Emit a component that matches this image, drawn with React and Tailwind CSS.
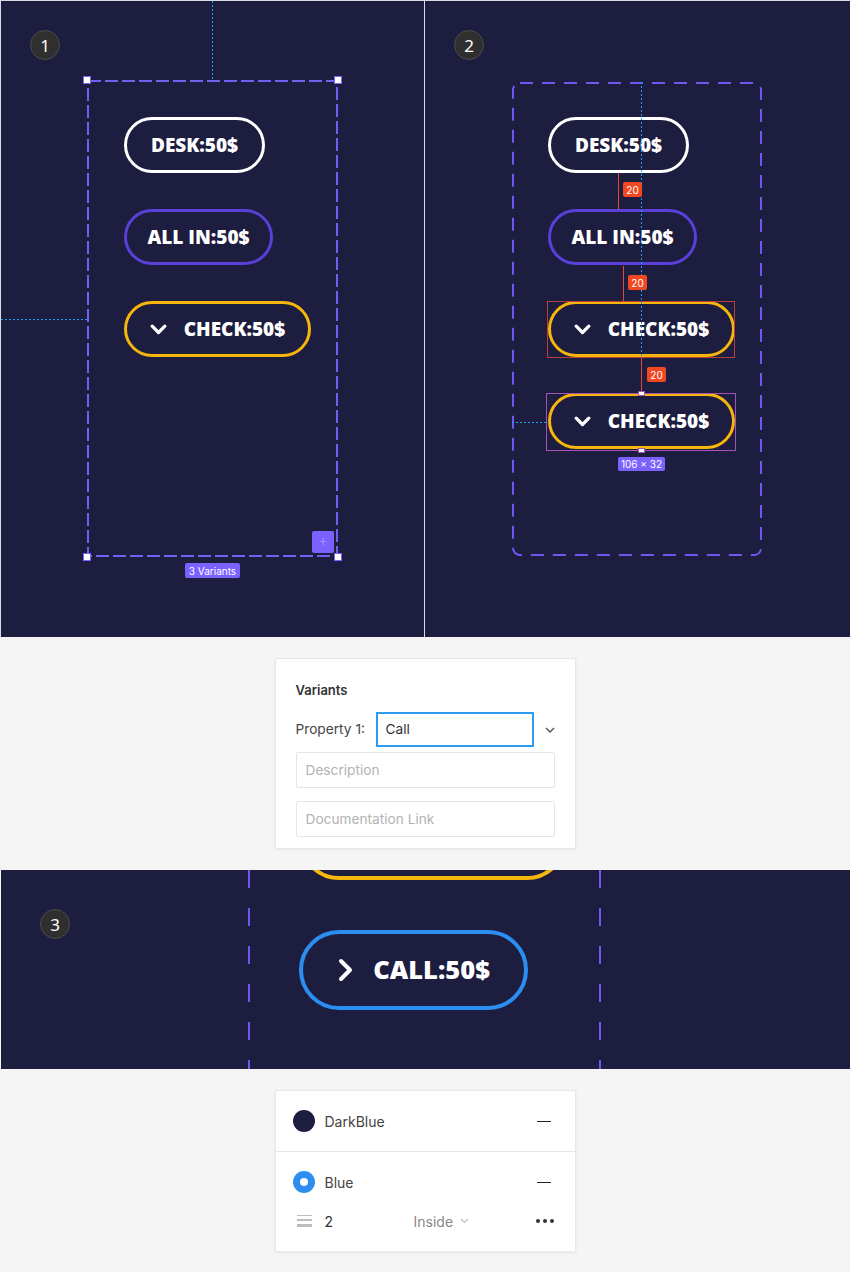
import React from "react";

const pillText =
  "font-['Open_Sans',sans-serif] font-extrabold text-[19px] leading-none text-white whitespace-nowrap";

const dotV =
  "w-px bg-[repeating-linear-gradient(to_bottom,#1d9df3_0px,#1d9df3_2px,transparent_2px,transparent_4px)]";
const dotH =
  "h-px bg-[repeating-linear-gradient(to_right,#1d9df3_0px,#1d9df3_2px,transparent_2px,transparent_4px)]";

function Badge({ n }) {
  return (
    <div className="flex h-[30px] w-[30px] items-center justify-center rounded-full border border-[#4d4d4d] bg-[#2f2f2f] font-['Noto_Sans',sans-serif] text-[17px] leading-none text-white">
      {n}
    </div>
  );
}

function ChevronDown() {
  return (
    <svg width="17" height="11" viewBox="0 0 17 11" fill="none">
      <path d="M2.2 2.2L8.5 8.5L14.8 2.2" stroke="white" strokeWidth="3.2" strokeLinecap="round" strokeLinejoin="round" />
    </svg>
  );
}

function Pill({ className, chevron, children }) {
  return (
    <div className={"flex h-[56px] shrink-0 items-center justify-center gap-[17px] rounded-full border-[3px] " + className}>
      {chevron && <ChevronDown />}
      <span className={pillText}>{children}</span>
    </div>
  );
}

function Handle({ className }) {
  return <div className={"absolute h-[8px] w-[8px] border border-[#7b61ff] bg-white " + className} />;
}

function Tag({ className, children }) {
  return (
    <div className={"absolute flex items-center justify-center rounded-[2px] font-['Inter',sans-serif] text-[10px] leading-none text-white " + className}>
      {children}
    </div>
  );
}

function Panel1() {
  return (
    <div className="relative h-[636px] w-[423px] shrink-0 bg-[#1d1d3f] pl-[86px] pt-[79px]">
      <div className="absolute left-[29px] top-[29px]">
        <Badge n="1" />
      </div>
      <div className={"absolute left-[211px] top-0 h-[79px] " + dotV} />
      <div className={"absolute left-0 top-[318px] w-[86px] " + dotH} />
      <div className="relative flex h-[477px] w-[251px] flex-col items-start gap-[36px] pl-[37px] pt-[37px]">
        <svg className="pointer-events-none absolute left-0 top-0" width="251" height="477">
          <rect x="1" y="1" width="249" height="475" fill="none" stroke="#7160f2" strokeWidth="2" strokeDasharray="13 4" />
        </svg>
        <Pill className="w-[141px] border-white">DESK:50$</Pill>
        <Pill className="w-[149px] border-[#5a3fd9]">ALL IN:50$</Pill>
        <Pill className="w-[187px] border-[#f6b60c]" chevron>
          CHECK:50$
        </Pill>
        <Handle className="-left-[4px] -top-[4px]" />
        <Handle className="-right-[4px] -top-[4px]" />
        <Handle className="-bottom-[4px] -left-[4px]" />
        <Handle className="-bottom-[4px] -right-[4px]" />
        <div className="absolute left-[225px] top-[451px] flex h-[22px] w-[22px] items-center justify-center rounded-[2px] bg-[#7b61ff] text-[14px] font-light leading-none text-[#b9aaff]">
          +
        </div>
        <Tag className="left-[98px] top-[483px] h-[15px] w-[55px] bg-[#7b61ff]">3 Variants</Tag>
      </div>
    </div>
  );
}

function Measure({ x, y, h, lx, ly }) {
  return (
    <>
      <div className="absolute w-px bg-[#e2483a]" style={{ left: x, top: y, height: h }} />
      <div
        className="absolute flex h-[15px] w-[19px] items-center justify-center rounded-[2px] bg-[#f24822] font-['Inter',sans-serif] text-[10px] leading-none text-white"
        style={{ left: lx, top: ly }}
      >
        20
      </div>
    </>
  );
}

function Panel2() {
  return (
    <div className="relative h-[636px] w-[425px] shrink-0 bg-[#1d1d3f] pl-[87px] pt-[81px]">
      <div className="absolute left-[29px] top-[29px]">
        <Badge n="2" />
      </div>
      <div className="relative flex h-[474px] w-[250px] flex-col items-start gap-[36px] pl-[36px] pt-[35px]">
        <svg className="pointer-events-none absolute left-0 top-0" width="250" height="474">
          <rect x="1" y="1" width="248" height="472" rx="7" fill="none" stroke="#6f58f0" strokeWidth="2" strokeDasharray="13 9" />
        </svg>
        <Pill className="w-[141px] border-white">DESK:50$</Pill>
        <Pill className="w-[149px] border-[#5a3fd9]">ALL IN:50$</Pill>
        <Pill className="w-[187px] border-[#f6b60c]" chevron>
          CHECK:50$
        </Pill>
        <Pill className="w-[187px] border-[#f6b60c]" chevron>
          CHECK:50$
        </Pill>
        <div className={"absolute left-[129px] top-0 h-[311px] " + dotV} />
        <div className={"absolute left-0 top-[340px] w-[34px] " + dotH} />
        <Measure x={106} y={91} h={37} lx={111} ly={100} />
        <Measure x={111} y={184} h={36} lx={116} ly={193} />
        <Measure x={129} y={276} h={36} lx={135} ly={285} />
        <div className="absolute left-[35px] top-[219px] h-[57px] w-[188px] border border-[#b8403a]" />
        <div className="absolute left-[34px] top-[311px] h-[58px] w-[190px] border border-[#a653b8]" />
        <div className="absolute left-[126px] top-[309px] h-[5px] w-[7px] border border-[#a653b8] bg-white" />
        <div className="absolute left-[126px] top-[366px] h-[5px] w-[7px] border border-[#a653b8] bg-white" />
        <Tag className="left-[106px] top-[375px] h-[14px] w-[47px] bg-[#7b61ff] text-[#e8e4ff]">106 × 32</Tag>
      </div>
    </div>
  );
}

function VariantsPanel() {
  return (
    <div className="mx-auto mt-[21px] h-[191px] w-[301px] border border-[#e6e6e6] bg-white px-[20px] pt-[23px] font-['Inter',sans-serif] shadow-[0_1px_3px_rgba(0,0,0,0.06)]">
      <div className="text-[13px] font-semibold leading-[16px] text-[#333]">Variants</div>
      <div className="mt-[14px] flex h-[35px] items-center">
        <span className="w-[80px] text-[13.7px] leading-none text-[#444]">Property 1:</span>
        <div className="flex h-[35px] w-[158px] items-center border-2 border-[#2d9cf0] pl-[8px] text-[13.7px] text-[#333]">
          Call
        </div>
        <svg className="ml-[11px]" width="10" height="6" viewBox="0 0 10 6" fill="none">
          <path d="M1 1L5 5L9 1" stroke="#555" strokeWidth="1.4" />
        </svg>
      </div>
      <div className="mt-[5px] flex h-[36px] w-[259px] items-center rounded-[2px] border border-[#e6e6e6] pl-[9px] text-[13.7px] text-[#b3b3b3]">
        Description
      </div>
      <div className="mt-[13px] flex h-[36px] w-[259px] items-center rounded-[2px] border border-[#e6e6e6] pl-[9px] text-[13.7px] text-[#b3b3b3]">
        Documentation Link
      </div>
    </div>
  );
}

const dashSide =
  "absolute top-0 h-full w-[2px] bg-[repeating-linear-gradient(to_bottom,#6f58f0_0px,#6f58f0_18px,transparent_18px,transparent_38px)]";

function Panel3() {
  return (
    <div className="relative ml-px mt-[21px] h-[199px] w-[849px] overflow-hidden bg-[#1d1d3f]">
      <div className="absolute left-[39px] top-[39px]">
        <Badge n="3" />
      </div>
      <div className="relative ml-[247px] h-full w-[353px] pl-[51px] pt-[60px]">
        <div className={"left-0 " + dashSide} />
        <div className={"right-0 " + dashSide} />
        <div className="absolute left-[51px] top-[-70px] h-[80px] w-[268px] rounded-full border-4 border-[#f6b60c]" />
        <div className="flex h-[80px] w-[229px] items-center justify-center gap-[18px] rounded-full border-4 border-[#2b8ff2]">
          <svg width="18" height="24" viewBox="0 0 18 24" fill="none">
            <path d="M4 3L13 12L4 21" stroke="white" strokeWidth="4" strokeLinecap="round" strokeLinejoin="round" />
          </svg>
          <span className="font-['Open_Sans',sans-serif] text-[25.5px] font-extrabold leading-none text-white">CALL:50$</span>
        </div>
      </div>
    </div>
  );
}

function Minus() {
  return <div className="h-px w-[14px] bg-[#222]" />;
}

function FillPanel() {
  return (
    <div className="mx-auto mt-[21px] h-[162px] w-[301px] border border-[#e8e8e8] bg-white font-['Inter',sans-serif] text-[14px] text-[#444] shadow-[0_1px_3px_rgba(0,0,0,0.06)]">
      <div className="flex h-[60px] items-center pl-[17px] pr-[24px]">
        <div className="h-[22px] w-[22px] rounded-full bg-[#1d1d3f]" />
        <span className="ml-[10px] flex-1">DarkBlue</span>
        <Minus />
      </div>
      <div className="h-px bg-[#e6e6e6]" />
      <div className="flex h-[60px] items-center pl-[17px] pr-[24px]">
        <div className="flex h-[22px] w-[22px] items-center justify-center rounded-full bg-[#2d8ef0]">
          <div className="h-[8px] w-[8px] rounded-full bg-white" />
        </div>
        <span className="ml-[10px] flex-1">Blue</span>
        <Minus />
      </div>
      <div className="flex h-[18px] items-center pl-[21px] pr-[21px]">
        <div className="flex w-[15px] flex-col gap-[3px]">
          <div className="h-px bg-[#bdbdbd]" />
          <div className="h-[2px] bg-[#bdbdbd]" />
          <div className="h-[3px] bg-[#bdbdbd]" />
        </div>
        <span className="ml-[13px] w-[89px] text-[#333]">2</span>
        <span className="text-[#888]">Inside</span>
        <svg className="ml-[7px]" width="9" height="6" viewBox="0 0 9 6" fill="none">
          <path d="M1 1L4.5 4.5L8 1" stroke="#bbb" strokeWidth="1.1" />
        </svg>
        <div className="ml-auto flex gap-[3px]">
          <div className="h-[4px] w-[4px] rounded-full bg-[#333]" />
          <div className="h-[4px] w-[4px] rounded-full bg-[#333]" />
          <div className="h-[4px] w-[4px] rounded-full bg-[#333]" />
        </div>
      </div>
    </div>
  );
}

export default function App() {
  return (
    <div className="min-h-[1272px] w-[850px] bg-[#f5f5f5]">
      <div className="flex gap-px bg-[#d9d9e6] pl-px pt-px">
        <Panel1 />
        <Panel2 />
      </div>
      <VariantsPanel />
      <Panel3 />
      <FillPanel />
    </div>
  );
}
